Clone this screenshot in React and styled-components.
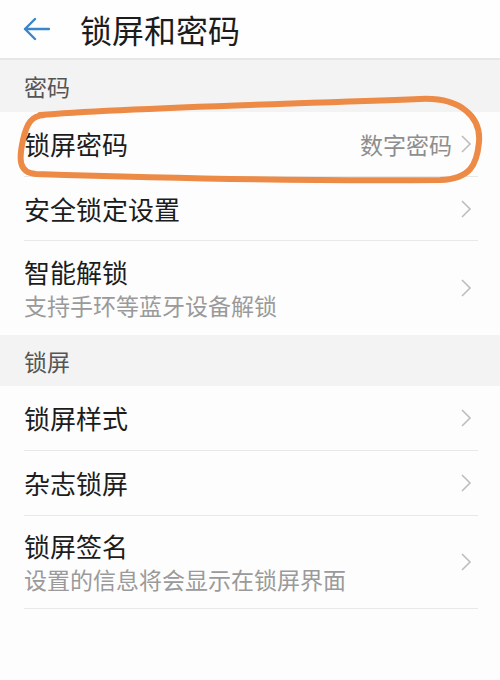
import React from 'react';
import styled, { createGlobalStyle } from 'styled-components';

const GlobalStyle = createGlobalStyle`
  html, body {
    margin: 0;
    padding: 0;
    background: #fdfdfd;
    font-family: "Noto Sans CJK SC", "Noto Sans", sans-serif;
  }
  * {
    box-sizing: border-box;
  }
`;

const Page = styled.div`
  position: relative;
  width: 500px;
  height: 680px;
  background: #fdfdfd;
  overflow: hidden;
`;

const Header = styled.div`
  display: flex;
  align-items: center;
  height: 60px;
  padding: 0 0 0 22px;
  background: #fefefe;
  border-bottom: 2px solid #e6e6e6;
`;

const BackButton = styled.div`
  display: flex;
  align-items: center;
  width: 58px;
  height: 58px;
`;

const Title = styled.div`
  font-size: 32px;
  color: #1c1c1c;
`;

const SectionHeader = styled.div`
  display: flex;
  align-items: center;
  height: ${p => p.h}px;
  padding: 0 24px;
  background: #f3f3f3;
  font-size: 23px;
  color: #555;
`;

const Row = styled.div`
  display: flex;
  align-items: center;
  height: ${p => p.h}px;
  margin: 0 22px 0 24px;
  border-bottom: ${p => (p.last ? 'none' : '1px solid #e8e8e8')};
`;

const Texts = styled.div`
  flex: 1;
  display: flex;
  flex-direction: column;
  gap: 2px;
`;

const Label = styled.div`
  font-size: 26px;
  color: #1c1c1c;
  line-height: 32px;
`;

const Sub = styled.div`
  font-size: 23px;
  color: #9a9a9a;
  line-height: 30px;
`;

const Value = styled.div`
  font-size: 23px;
  color: #8e8e8e;
  margin-right: 8px;
`;

const Chevron = () => (
  <svg width="12" height="20" viewBox="0 0 12 20" style={{ marginRight: 6 }}>
    <path d="M2 2 L10 10 L2 18" fill="none" stroke="#bdbdbd" strokeWidth="1.6" />
  </svg>
);

const Annotation = styled.svg`
  position: absolute;
  left: 0;
  top: 0;
  pointer-events: none;
`;

export default function App() {
  return (
    <Page>
      <GlobalStyle />
      <Header>
        <BackButton>
          <svg width="28" height="24" viewBox="0 0 28 24">
            <path d="M13 2 L3 12 L13 22 M3 12 L27 12" fill="none" stroke="#3b86c8" strokeWidth="2.4" strokeLinecap="round" strokeLinejoin="round" />
          </svg>
        </BackButton>
        <Title>锁屏和密码</Title>
      </Header>

      <SectionHeader h={52}>密码</SectionHeader>
      <Row h={65}>
        <Texts><Label>锁屏密码</Label></Texts>
        <Value>数字密码</Value>
        <Chevron />
      </Row>
      <Row h={64}>
        <Texts><Label>安全锁定设置</Label></Texts>
        <Chevron />
      </Row>
      <Row h={94} last>
        <Texts>
          <Label>智能解锁</Label>
          <Sub>支持手环等蓝牙设备解锁</Sub>
        </Texts>
        <Chevron />
      </Row>

      <SectionHeader h={51}>锁屏</SectionHeader>
      <Row h={65}>
        <Texts><Label>锁屏样式</Label></Texts>
        <Chevron />
      </Row>
      <Row h={65}>
        <Texts><Label>杂志锁屏</Label></Texts>
        <Chevron />
      </Row>
      <Row h={93}>
        <Texts>
          <Label>锁屏签名</Label>
          <Sub>设置的信息将会显示在锁屏界面</Sub>
        </Texts>
        <Chevron />
      </Row>

      <Annotation width="500" height="680" viewBox="0 0 500 680">
        <path
          d="M40 115 C120 108 260 105 420 99 C462 97 481 118 479 142 C477 165 470 179 440 180 C330 181 160 178 36 174 C18 173 19 158 23 140 C27 122 32 116 44 115"
          fill="none"
          stroke="#ec8a46"
          strokeWidth="6"
          strokeLinecap="round"
          strokeLinejoin="round"
        />
      </Annotation>
    </Page>
  );
}
